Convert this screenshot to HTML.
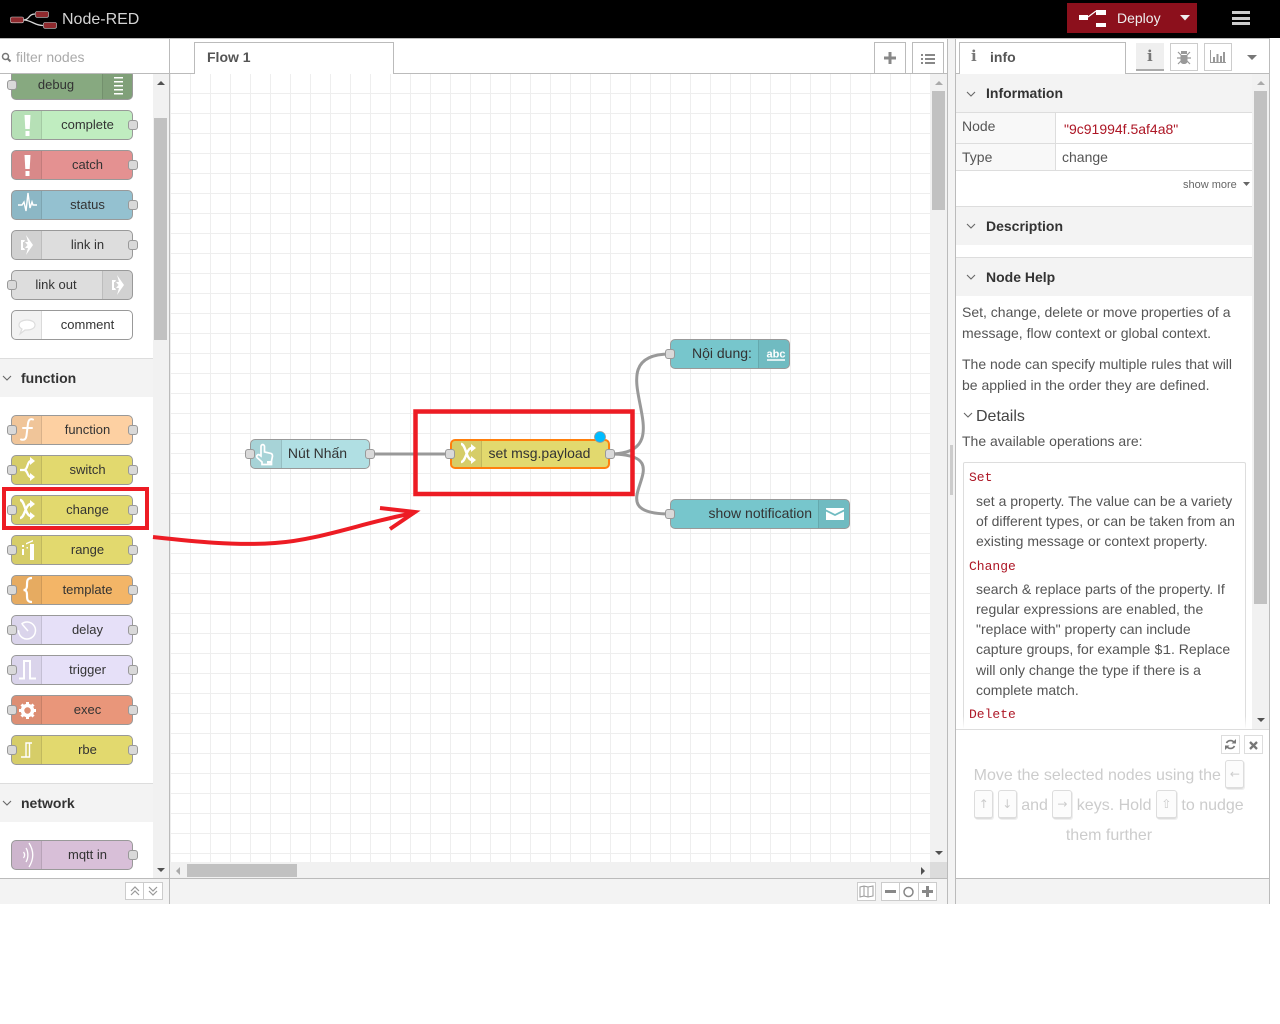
<!DOCTYPE html>
<html><head><meta charset="utf-8"><title>Node-RED</title>
<style>
html,body{margin:0;padding:0;background:#fff;width:1280px;height:1024px;overflow:hidden}
body{font-family:"Liberation Sans","Noto Sans CJK SC",sans-serif;color:#333;position:relative}
.a,.a *{box-sizing:border-box}
.a{position:absolute}
.n{position:absolute;width:122px;height:30px;box-sizing:border-box;border:1px solid #999;border-radius:5px;font-size:13px;line-height:27px;text-align:center;color:#333}
.pal .n{left:11px}
.n .i{position:absolute;top:0;bottom:0;left:0;width:30px;background:rgba(0,0,0,.05);border-right:1px solid rgba(0,0,0,.1);border-radius:4px 0 0 4px}
.n .i.r{left:auto;right:0;border-right:0;border-left:1px solid rgba(0,0,0,.1);border-radius:0 4px 4px 0}
.n .i svg{position:absolute;left:0;top:-1px;width:30px;height:30px}
.n .t{position:absolute;left:31px;right:0;top:0}
.n .t.l{left:0;right:32px}
.p{position:absolute;width:10px;height:10px;box-sizing:border-box;border:1px solid #999;border-radius:3px;background:#d9d9d9;top:9px}
.p.L{left:-5px}.p.R{right:-6px}
.cv .p.L{left:-6px}
.sh{position:absolute;left:0;width:153px;height:39px;box-sizing:border-box;background:#f3f3f3;border-top:1px solid #ddd;font-size:14px;font-weight:bold;line-height:38px;padding-left:21px;color:#333}
.sh svg,.ch{position:absolute}
.c{position:absolute;box-sizing:border-box;background:#f3f3f3;border-top:1px solid #ddd;left:956px;width:296px;height:39px;font-size:14px;font-weight:bold;line-height:38px;padding-left:30px;color:#333}
.b{position:absolute;box-sizing:border-box;border:1px solid #bbb;background:#fff}
.h{position:absolute;font-size:14px;color:#555;white-space:nowrap;line-height:20px}
.m{position:absolute;font:13px/20px "Liberation Mono",monospace;color:#ad1625}
.tip{position:absolute;left:955px;width:308px;text-align:center;font-size:16px;line-height:32px;height:30px;color:#ccc;white-space:nowrap}
kbd{display:inline-block;box-sizing:border-box;width:19px;height:29px;vertical-align:top;border:1px solid #ddd;border-bottom:2px solid #ddd;border-radius:3px;background:#fcfcfc;font:12px/26px "DejaVu Sans",sans-serif;color:#ccc;text-align:center;margin:0;box-shadow:1px 1px 0 #eee}
svg{display:block}
</style></head><body>
<svg width="0" height="0" style="position:absolute"><defs>
<symbol id="alert" viewBox="0 0 30 30"><path fill="#fff" d="M12.500 5h6l-.8 14h-4.400zM13.500 21h4v5h-4z"/></symbol>
<symbol id="list" viewBox="0 0 30 30"><path fill="#fff" d="M11 7h9v1.500h-9zM11 11h9v1.500h-9zM11 15h9v1.500h-9zM11 19h9v1.500h-9zM11 23h9v1.500h-9z"/></symbol>
<symbol id="pulse" viewBox="0 0 30 30"><path fill="none" stroke="#fff" stroke-width="1.400" stroke-linejoin="miter" d="M6 15h4l2-3 2 9 2-18 2 15 2-6 1 3h4"/></symbol>
<symbol id="link" viewBox="0 0 30 30"><path fill="#fff" d="M14 5l7 10-7 10 2-7h-3l2.500-3-2.500-3h3zM9 10h4l-1 2H11v6h1l1 2H9z"/></symbol>
<symbol id="bubble" viewBox="0 0 30 30"><path fill="#fff" stroke="#ddd" stroke-width="1.200" d="M7 15c0-3 3.500-5 8-5s8 2 8 5-3.500 5-8 5l-2 0-5 4 2-5c-2-1-3-2.300-3-4z"/></symbol>
<symbol id="f" viewBox="0 0 30 30"><path fill="none" stroke="#fff" stroke-width="2" stroke-linecap="round" d="M21 4.500c-3-1.200-4.500.5-5 4l-1.500 12c-.5 3.500-2 5-5.500 4M11 13h9"/></symbol>
<symbol id="switch" viewBox="0 0 30 30"><path fill="none" stroke="#fff" stroke-width="2.200" d="M8 15h4c4 0 3-9 7-9M12 15c4 0 3 7 7 7"/><path fill="#fff" d="M18 2l5 4-5 4zM18 18l5 4-5 4z"/></symbol>
<symbol id="shuffle" viewBox="0 0 30 30"><path fill="none" stroke="#fff" stroke-width="2.400" d="M8 5C13 5 13 21 19 21M8 23C13 23 13 9 19 9"/><path fill="#fff" d="M18 5l5 4-5 4zM18 17l5 4-5 4z"/></symbol>
<symbol id="range" viewBox="0 0 30 30"><path fill="#fff" d="M10 10h2v2h-2zM10 14h2v6h-2zM18 9h4v16h-4zM14 8l7-3v1.500l-7 3zM14.500 12h1.500v1.500h-1.500z"/></symbol>
<symbol id="brace" viewBox="0 0 30 30"><path fill="none" stroke="#fff" stroke-width="2.200" d="M20 3c-5 0-5 3-5 7 0 3-.5 5-3.500 5 3 0 3.500 2 3.500 5 0 4 0 7 5 7"/></symbol>
<symbol id="delay" viewBox="0 0 30 30"><circle cx="15" cy="15.500" r="8.500" fill="none" stroke="#fff" stroke-width="1.500" stroke-dasharray="46 8" transform="rotate(-130 15 15.500)"/><path stroke="#fff" stroke-width="1.500" d="M10 9l6 7"/></symbol>
<symbol id="trigger" viewBox="0 0 30 30"><path fill="none" stroke="#fff" stroke-width="2" d="M7 23.500h5V6h6v17.500h6"/></symbol>
<symbol id="gear" viewBox="0 0 30 30"><circle cx="15.500" cy="15.500" r="5" fill="none" stroke="#fff" stroke-width="3.500"/><path fill="none" stroke="#fff" stroke-width="3" d="M15.500 7v3M15.500 21v3M7 15.500h3M21 15.500h3M9.500 9.500l2 2M19.500 19.500l2 2M21.500 9.500l-2 2M11.500 19.500l-2 2"/></symbol>
<symbol id="rbe" viewBox="0 0 30 30"><path fill="none" stroke="#fff" stroke-width="1.400" d="M9 22h5V8h6M17.500 8v14H14"/></symbol>
<symbol id="mqtt" viewBox="0 0 30 30"><path fill="none" stroke="#fff" stroke-width="1.300" d="M11.500 12c1.500 2 1.500 4 0 6M14 8c2.500 4 2.500 10 0 14M17 3c5 8 5 16 0 24"/></symbol>
<symbol id="hand" viewBox="0 0 30 30"><path fill="none" stroke="#fff" stroke-width="1.700" d="M10 17V7.500c0-2.500 3.500-2.500 3.500 0V13l6 1.300c1.500.3 2 1.200 2 2.700l-1 5v3.500H11V23l-5-4.500c-1-2 1-3.500 2.500-2.500z"/><path fill="#fff" d="M16 22h4v2.500h-4z"/></symbol>
<symbol id="deploy" viewBox="0 0 28 18"><path fill="#fff" d="M0 5h9v5H0zM17 0h10v5H17zM17 13h10v4H17z"/><path fill="none" stroke="#fff" stroke-width="1.200" d="M9 7l8-6"/></symbol>
<symbol id="chev" viewBox="0 0 10 6"><path fill="none" stroke="#666" stroke-width="1.100" d="M1 1l4 4 4-4"/></symbol>
</defs></svg>

<!-- header -->
<div class="a" style="left:0;top:0;width:1280px;height:38px;background:#000"></div>
<svg class="a" style="left:0;top:0" width="60" height="38"><path d="M23 20C30 20 28 14 35 14M23 20C32 20 34 25.500 43 25.500" fill="none" stroke="#d8d8d8" stroke-width="1.300"/><rect x="10.500" y="17" width="13" height="5.800" rx="1.500" fill="#8f2a2e" stroke="#d0d0d0" stroke-width=".6"/><rect x="35.500" y="11.500" width="13" height="5.800" rx="1.500" fill="#8f2a2e" stroke="#d0d0d0" stroke-width=".6"/><rect x="43.500" y="22.500" width="13" height="5.800" rx="1.500" fill="#8f2a2e" stroke="#d0d0d0" stroke-width=".6"/></svg>
<div class="a" style="left:62px;top:10px;font-size:16px;line-height:19px;color:#d4d4d4;white-space:nowrap">Node-RED</div>
<div class="a" style="left:1067px;top:3px;width:130px;height:30px;background:#8c101c"></div>
<svg class="a" style="left:1079px;top:10px" width="28" height="18"><use href="#deploy"/></svg>
<div class="a" style="left:1117px;top:9px;font-size:14px;line-height:18px;color:#eee">Deploy</div>
<svg class="a" style="left:1180px;top:15px" width="10" height="6"><path d="M0 0h10L5 5.500z" fill="#eee"/></svg>
<div class="a" style="left:1232px;top:11px;width:18px;height:3px;background:#ccc"></div>
<div class="a" style="left:1232px;top:16.500px;width:18px;height:3px;background:#ccc"></div>
<div class="a" style="left:1232px;top:22px;width:18px;height:3px;background:#ccc"></div>
<div class="a" style="left:0;top:38px;width:1270px;height:1px;background:#bbb"></div>

<!-- palette -->
<div class="a pal" style="left:0;top:74px;width:153px;height:804px;overflow:hidden">
<div class="a" style="left:0;top:-74px;width:153px;height:950px">
<div class="n" style="top:70px;background:#87a980"><div class="i r"><svg><use href="#list"/></svg></div><div class="t l">debug</div><div class="p L"></div></div>
<div class="n" style="top:110px;background:#c0edc0"><div class="i"><svg><use href="#alert"/></svg></div><div class="t">complete</div><div class="p R"></div></div>
<div class="n" style="top:150px;background:#e49191"><div class="i"><svg><use href="#alert"/></svg></div><div class="t">catch</div><div class="p R"></div></div>
<div class="n" style="top:190px;background:#94c1d0"><div class="i"><svg><use href="#pulse"/></svg></div><div class="t">status</div><div class="p R"></div></div>
<div class="n" style="top:230px;background:#ddd"><div class="i"><svg><use href="#link"/></svg></div><div class="t">link in</div><div class="p R"></div></div>
<div class="n" style="top:270px;background:#ddd"><div class="i r"><svg><use href="#link"/></svg></div><div class="t l">link out</div><div class="p L"></div></div>
<div class="n" style="top:310px;background:#fff"><div class="i"><svg><use href="#bubble"/></svg></div><div class="t">comment</div></div>
<div class="sh" style="top:358px">function<svg style="left:2px;top:16px" width="10" height="6"><use href="#chev"/></svg></div>
<div class="n" style="top:415px;background:#fdd0a2"><div class="i"><svg><use href="#f"/></svg></div><div class="t">function</div><div class="p L"></div><div class="p R"></div></div>
<div class="n" style="top:455px;background:#e2d96e"><div class="i"><svg><use href="#switch"/></svg></div><div class="t">switch</div><div class="p L"></div><div class="p R"></div></div>
<div class="n" style="top:495px;background:#e2d96e"><div class="i"><svg><use href="#shuffle"/></svg></div><div class="t">change</div><div class="p L"></div><div class="p R"></div></div>
<div class="n" style="top:535px;background:#e2d96e"><div class="i"><svg><use href="#range"/></svg></div><div class="t">range</div><div class="p L"></div><div class="p R"></div></div>
<div class="n" style="top:575px;background:#f3b567"><div class="i"><svg><use href="#brace"/></svg></div><div class="t">template</div><div class="p L"></div><div class="p R"></div></div>
<div class="n" style="top:615px;background:#e6e0f8"><div class="i"><svg><use href="#delay"/></svg></div><div class="t">delay</div><div class="p L"></div><div class="p R"></div></div>
<div class="n" style="top:655px;background:#e6e0f8"><div class="i"><svg><use href="#trigger"/></svg></div><div class="t">trigger</div><div class="p L"></div><div class="p R"></div></div>
<div class="n" style="top:695px;background:#e9967a"><div class="i"><svg><use href="#gear"/></svg></div><div class="t">exec</div><div class="p L"></div><div class="p R"></div></div>
<div class="n" style="top:735px;background:#e2d96e"><div class="i"><svg><use href="#rbe"/></svg></div><div class="t">rbe</div><div class="p L"></div><div class="p R"></div></div>
<div class="sh" style="top:783px">network<svg style="left:2px;top:16px" width="10" height="6"><use href="#chev"/></svg></div>
<div class="n" style="top:840px;background:#d8bfd8"><div class="i"><svg><use href="#mqtt"/></svg></div><div class="t">mqtt in</div><div class="p R"></div></div>
</div></div>
<!-- palette scrollbar -->
<div class="a" style="left:153px;top:74px;width:16px;height:804px;background:#f1f1f1"></div>
<div class="a" style="left:154px;top:118px;width:13px;height:222px;background:#c1c1c1"></div>
<svg class="a" style="left:156px;top:80px" width="10" height="6"><path d="M1 5h8L5 1z" fill="#505050"/></svg>
<svg class="a" style="left:156px;top:867px" width="10" height="6"><path d="M1 1h8L5 5z" fill="#505050"/></svg>
<!-- filter -->
<div class="a" style="left:0;top:39px;width:169px;height:34px;background:#fff"></div>
<svg class="a" style="left:1px;top:52px" width="11" height="11"><circle cx="4.500" cy="4.500" r="3" fill="none" stroke="#777" stroke-width="1.500"/><path d="M6.500 6.500l3 3" stroke="#777" stroke-width="2"/></svg>
<div class="a" style="left:16px;top:48px;font-size:14px;line-height:18px;color:#aaa">filter nodes</div>
<div class="a" style="left:0;top:73px;width:195px;height:1px;background:#bbb"></div>
<div class="a" style="left:169px;top:39px;width:1px;height:865px;background:#bbb"></div>

<!-- workspace tabs -->
<div class="a" style="left:170px;top:39px;width:777px;height:34px;background:#fff"></div>
<div class="a" style="left:170px;top:73px;width:777px;height:1px;background:#bbb"></div>
<div class="a" style="left:194px;top:42px;width:200px;height:32px;background:#fff;border:1px solid #bbb;border-bottom:0;font-size:14px;font-weight:bold;line-height:29px;padding-left:12px;color:#555">Flow 1</div>
<div class="b" style="left:874px;top:42px;width:32px;height:32px"></div>
<svg class="a" style="left:884px;top:52px" width="12" height="12"><path d="M4.500 0h3v4.500H12v3H7.500V12h-3V7.500H0v-3h4.500z" fill="#888"/></svg>
<div class="b" style="left:912px;top:42px;width:32px;height:32px"></div>
<svg class="a" style="left:921px;top:53px" width="14" height="12"><path d="M4 1h10v2H4zM4 5h10v2H4zM4 9h10v2H4zM0 1h2v2H0zM0 5h2v2H0zM0 9h2v2H0z" fill="#888"/></svg>

<!-- canvas -->
<div class="a" style="left:170px;top:74px;width:760px;height:788px;overflow:hidden;background-color:#fff;background-image:linear-gradient(#eee 1px,transparent 1px),linear-gradient(90deg,#eee 1px,transparent 1px);background-size:20px 20px;background-position:0 -1px"></div>
<svg class="a" style="left:0;top:0" width="1280" height="1024"><g fill="none" stroke="#999" stroke-width="3"><path d="M370 454H450"/><path d="M610 454C690 454 590 354 670 354"/><path d="M610 454C690 454 590 514 670 514"/></g></svg>
<div class="cv">
<div class="n" style="left:250px;top:439px;width:120px;background:#b0dfe3;font-size:14px;line-height:26px"><div class="i"><svg><use href="#hand"/></svg></div><div class="t" style="left:30px;right:15px;white-space:nowrap">Nút Nhấn</div><div class="p L"></div><div class="p R"></div></div>
<div class="n" style="left:450px;top:439px;width:160px;background:#e2d96e;font-size:14px;line-height:24px;border:2px solid #ff7f0e"><div class="i" style="left:0;width:29px"><svg style="top:-2px;left:1px"><use href="#shuffle"/></svg></div><div class="t" style="left:29px;right:10px;top:0;white-space:nowrap">set msg.payload</div><div class="p L" style="left:-7px;top:8px"></div><div class="p R" style="right:-7px;top:8px"></div></div>
<div class="n" style="left:670px;top:339px;width:120px;background:#77c6cc;font-size:14px;line-height:26px"><div class="i r"><svg><text x="17" y="18.500" font-size="11" font-weight="bold" fill="#fff" text-anchor="middle" font-family="Liberation Sans">abc</text><path d="M8 21h18" stroke="#fff" stroke-width="1.500"/></svg></div><div class="t l" style="left:21px;right:38px;text-align:left;white-space:nowrap">Nội dung:</div><div class="p L"></div></div>
<div class="n" style="left:670px;top:499px;width:180px;background:#77c6cc;font-size:14px;line-height:26px"><div class="i r"><svg><path fill="#fff" d="M7 9h18v1.500L16 15l-9-4.500zM7 12.500l9 4.500 9-4.500V21H7z"/></svg></div><div class="t l" style="right:37px;left:0;text-align:right;white-space:nowrap">show notification</div><div class="p L"></div></div>
</div>
<svg class="a" style="left:0;top:0;pointer-events:none" width="1280" height="1024">
<circle cx="600" cy="437" r="5.500" fill="#00bcff" stroke="#999" stroke-width=".8"/>
<rect x="4" y="489" width="143" height="39" fill="none" stroke="#ed1c24" stroke-width="4"/>
<rect x="415.500" y="411.500" width="217" height="82.500" fill="none" stroke="#ed1c24" stroke-width="4.500"/>
<path d="M153 537C190 541 235 546 275 543C320 540 365 522 414 513M380 508L415 512L390 529" fill="none" stroke="#ed1c24" stroke-width="4"/>
</svg>
<!-- canvas scrollbars -->
<div class="a" style="left:930px;top:74px;width:17px;height:788px;background:#f1f1f1"></div>
<div class="a" style="left:932px;top:91px;width:13px;height:119px;background:#c1c1c1"></div>
<svg class="a" style="left:934px;top:80px" width="10" height="6"><path d="M1 5h8L5 1z" fill="#aaa"/></svg>
<svg class="a" style="left:934px;top:850px" width="10" height="6"><path d="M1 1h8L5 5z" fill="#505050"/></svg>
<div class="a" style="left:170px;top:862px;width:760px;height:16px;background:#f1f1f1"></div>
<div class="a" style="left:187px;top:864px;width:110px;height:13px;background:#c1c1c1"></div>
<svg class="a" style="left:175px;top:866px" width="6" height="10"><path d="M5 1v8L1 5z" fill="#aaa"/></svg>
<svg class="a" style="left:920px;top:866px" width="6" height="10"><path d="M1 1v8l4-4z" fill="#505050"/></svg>
<div class="a" style="left:930px;top:862px;width:17px;height:16px;background:#dcdcdc"></div>

<!-- footer -->
<div class="a" style="left:0;top:878px;width:1270px;height:26px;background:#f3f3f3;border-top:1px solid #bbb"></div>
<div class="a" style="left:169px;top:878px;width:1px;height:26px;background:#bbb"></div>
<div class="b" style="left:125px;top:882px;width:19px;height:18px;border-color:#ccc"></div>
<div class="b" style="left:143px;top:882px;width:20px;height:18px;border-color:#ccc"></div>
<svg class="a" style="left:130px;top:886px" width="28" height="10"><g fill="none" stroke="#999" stroke-width="1.200"><path d="M1 5l4-4 4 4M1 9l4-4 4 4M19 1l4 4 4-4M19 5l4 4 4-4"/></g></svg>
<div class="b" style="left:857px;top:882px;width:19px;height:19px;border-color:#ccc"></div>
<svg class="a" style="left:859px;top:885px" width="15" height="13"><path d="M1 2l4-1 4 1 5-1v10l-5 1-4-1-4 1zM5 1v10M9 2v10" fill="none" stroke="#999"/></svg>
<div class="b" style="left:881px;top:882px;width:19px;height:19px;border-color:#ccc"></div>
<div class="b" style="left:899px;top:882px;width:20px;height:19px;border-color:#ccc"></div>
<div class="b" style="left:918px;top:882px;width:19px;height:19px;border-color:#ccc"></div>
<div class="a" style="left:885px;top:890px;width:11px;height:3px;background:#888"></div>
<svg class="a" style="left:902px;top:886px" width="13" height="12"><circle cx="6.500" cy="6" r="4.500" fill="none" stroke="#888" stroke-width="1.500"/></svg>
<svg class="a" style="left:922px;top:886px" width="11" height="11"><path d="M4 0h3v4h4v3H7v4H4V7H0V4h4z" fill="#888"/></svg>

<!-- separator -->
<div class="a" style="left:947px;top:39px;width:9px;height:865px;background:#f3f3f3;border-left:1px solid #bbb;border-right:1px solid #bbb"></div>
<div class="a" style="left:950px;top:445px;width:3px;height:50px;background:#ccc"></div>

<!-- sidebar -->
<div class="a" style="left:956px;top:39px;width:313px;height:35px;background:#fff"></div>
<div class="a" style="left:956px;top:73px;width:313px;height:1px;background:#bbb"></div>
<div class="a" style="left:959px;top:42px;width:167px;height:32px;background:#fff;border:1px solid #bbb;border-bottom:0;font-size:14px;font-weight:bold;line-height:29px;padding-left:30px;color:#555">info</div>
<div class="a" style="left:971px;top:49px;font:bold 15px/15px 'DejaVu Serif',serif;color:#777">i</div>
<div class="a" style="left:1136px;top:43px;width:28px;height:28px;background:#efefef;border-bottom:2px solid #aaa"></div>
<div class="a" style="left:1147px;top:49px;font:bold 15px/15px 'DejaVu Serif',serif;color:#777">i</div>
<div class="b" style="left:1170px;top:43px;width:28px;height:28px;border-color:#ccc"></div>
<svg class="a" style="left:1177px;top:49px" width="14" height="16"><path d="M4 2h6v3H4zM3.500 6h7v6c0 2-1.500 3-3.500 3s-3.500-1-3.500-3z" fill="#999"/><path d="M1 3l3 3M13 3l-3 3M0 9h4M14 9h-4M1 15l3-3M13 15l-3-3" stroke="#999" stroke-width="1.200"/></svg>
<div class="b" style="left:1204px;top:43px;width:28px;height:28px;border-color:#ccc"></div>
<svg class="a" style="left:1210px;top:50px" width="16" height="14"><path d="M.5 0v12.500H16" fill="none" stroke="#999"/><path d="M3 7h2v5H3zM6.500 4h2v8h-2zM10 6h2v6h-2zM13 2h2v10h-2z" fill="#999"/></svg>
<svg class="a" style="left:1247px;top:55px" width="10" height="6"><path d="M0 0h10L5 5z" fill="#777"/></svg>

<div class="a" style="left:956px;top:74px;width:296px;height:655px;background:#fff;overflow:hidden"></div>
<div class="c" style="top:74px;height:38px;border-top:0">Information<svg style="position:absolute;left:10px;top:17px" width="10" height="6"><use href="#chev"/></svg></div>
<div class="a" style="left:956px;top:112px;width:296px;height:1px;background:#ddd"></div>
<div class="a" style="left:956px;top:113px;width:99px;height:57px;background:#f8f8f8"></div>
<div class="a" style="left:1055px;top:113px;width:1px;height:57px;background:#ddd"></div>
<div class="a" style="left:956px;top:143px;width:296px;height:1px;background:#ddd"></div>
<div class="a" style="left:956px;top:170px;width:296px;height:1px;background:#ddd"></div>
<div class="h" style="left:962px;top:116px">Node</div>
<div class="h" style="left:1064px;top:119px;color:#ad1625">"9c91994f.5af4a8"</div>
<div class="h" style="left:962px;top:147px">Type</div>
<div class="h" style="left:1062px;top:147px">change</div>
<div class="h" style="left:1183px;top:175px;font-size:11px;color:#666">show more</div>
<svg class="a" style="left:1243px;top:182px" width="7" height="4"><path d="M0 0h7L3.500 4z" fill="#666"/></svg>
<div class="c" style="top:206px">Description<svg style="position:absolute;left:10px;top:16px" width="10" height="6"><use href="#chev"/></svg></div>
<div class="c" style="top:257px">Node Help<svg style="position:absolute;left:10px;top:16px" width="10" height="6"><use href="#chev"/></svg></div>
<div class="h" style="left:962px;top:302px">Set, change, delete or move properties of a</div>
<div class="h" style="left:962px;top:323px">message, flow context or global context.</div>
<div class="h" style="left:962px;top:354px">The node can specify multiple rules that will</div>
<div class="h" style="left:962px;top:375px">be applied in the order they are defined.</div>
<svg class="a" style="left:963px;top:412px" width="10" height="6"><use href="#chev"/></svg>
<div class="h" style="left:976px;top:407px;font-size:16px;color:#444">Details</div>
<div class="h" style="left:962px;top:431px">The available operations are:</div>
<div class="a" style="left:963px;top:462px;width:283px;height:267px;border:1px solid #ddd;border-bottom:0;border-radius:2px 2px 0 0"></div>
<div class="m" style="left:969px;top:468px">Set</div>
<div class="h" style="left:976px;top:491px">set a property. The value can be a variety</div>
<div class="h" style="left:976px;top:511px">of different types, or can be taken from an</div>
<div class="h" style="left:976px;top:531px">existing message or context property.</div>
<div class="m" style="left:969px;top:557px">Change</div>
<div class="h" style="left:976px;top:579px">search &amp; replace parts of the property. If</div>
<div class="h" style="left:976px;top:599px">regular expressions are enabled, the</div>
<div class="h" style="left:976px;top:619px">"replace with" property can include</div>
<div class="h" style="left:976px;top:639px">capture groups, for example <span style="font:14px 'Liberation Mono',monospace">$1</span>. Replace</div>
<div class="h" style="left:976px;top:660px">will only change the type if there is a</div>
<div class="h" style="left:976px;top:680px">complete match.</div>
<div class="m" style="left:969px;top:705px">Delete</div>
<div class="a" style="left:956px;top:716px;width:296px;height:13px;background:linear-gradient(rgba(255,255,255,0),#fff)"></div>
<!-- sidebar scrollbar -->
<div class="a" style="left:1252px;top:74px;width:17px;height:655px;background:#f1f1f1"></div>
<div class="a" style="left:1254px;top:91px;width:13px;height:513px;background:#c1c1c1"></div>
<svg class="a" style="left:1256px;top:80px" width="10" height="6"><path d="M1 5h8L5 1z" fill="#aaa"/></svg>
<svg class="a" style="left:1256px;top:717px" width="10" height="6"><path d="M1 1h8L5 5z" fill="#505050"/></svg>
<div class="a" style="left:1269px;top:39px;width:1px;height:865px;background:#bbb"></div>
<!-- tips -->
<div class="a" style="left:956px;top:729px;width:313px;height:149px;background:#fff;border-top:1px solid #ddd"></div>
<div class="b" style="left:1221px;top:735px;width:19px;height:19px;border-color:#ddd"></div>
<svg class="a" style="left:1225px;top:739px" width="11" height="11"><path d="M9.500 4A4.500 4.500 0 0 0 1.500 4M1.500 7a4.500 4.500 0 0 0 8 0" fill="none" stroke="#777" stroke-width="1.700"/><path d="M6.500 4.500H11V0zM4.500 6.500H0V11z" fill="#777"/></svg>
<div class="b" style="left:1244px;top:735px;width:19px;height:19px;border-color:#ddd"></div>
<svg class="a" style="left:1249px;top:741px" width="9" height="9"><path d="M1 1l7 7M8 1l-7 7" stroke="#777" stroke-width="2.300"/></svg>
<div class="tip" style="top:760px">Move the selected nodes using the <kbd>←</kbd></div>
<div class="tip" style="top:790px"><kbd>↑</kbd> <kbd>↓</kbd> and <kbd style="width:20px">→</kbd> keys. Hold <kbd style="width:21px">⇧</kbd> to nudge</div>
<div class="tip" style="top:820px">them further</div>
</body></html>
